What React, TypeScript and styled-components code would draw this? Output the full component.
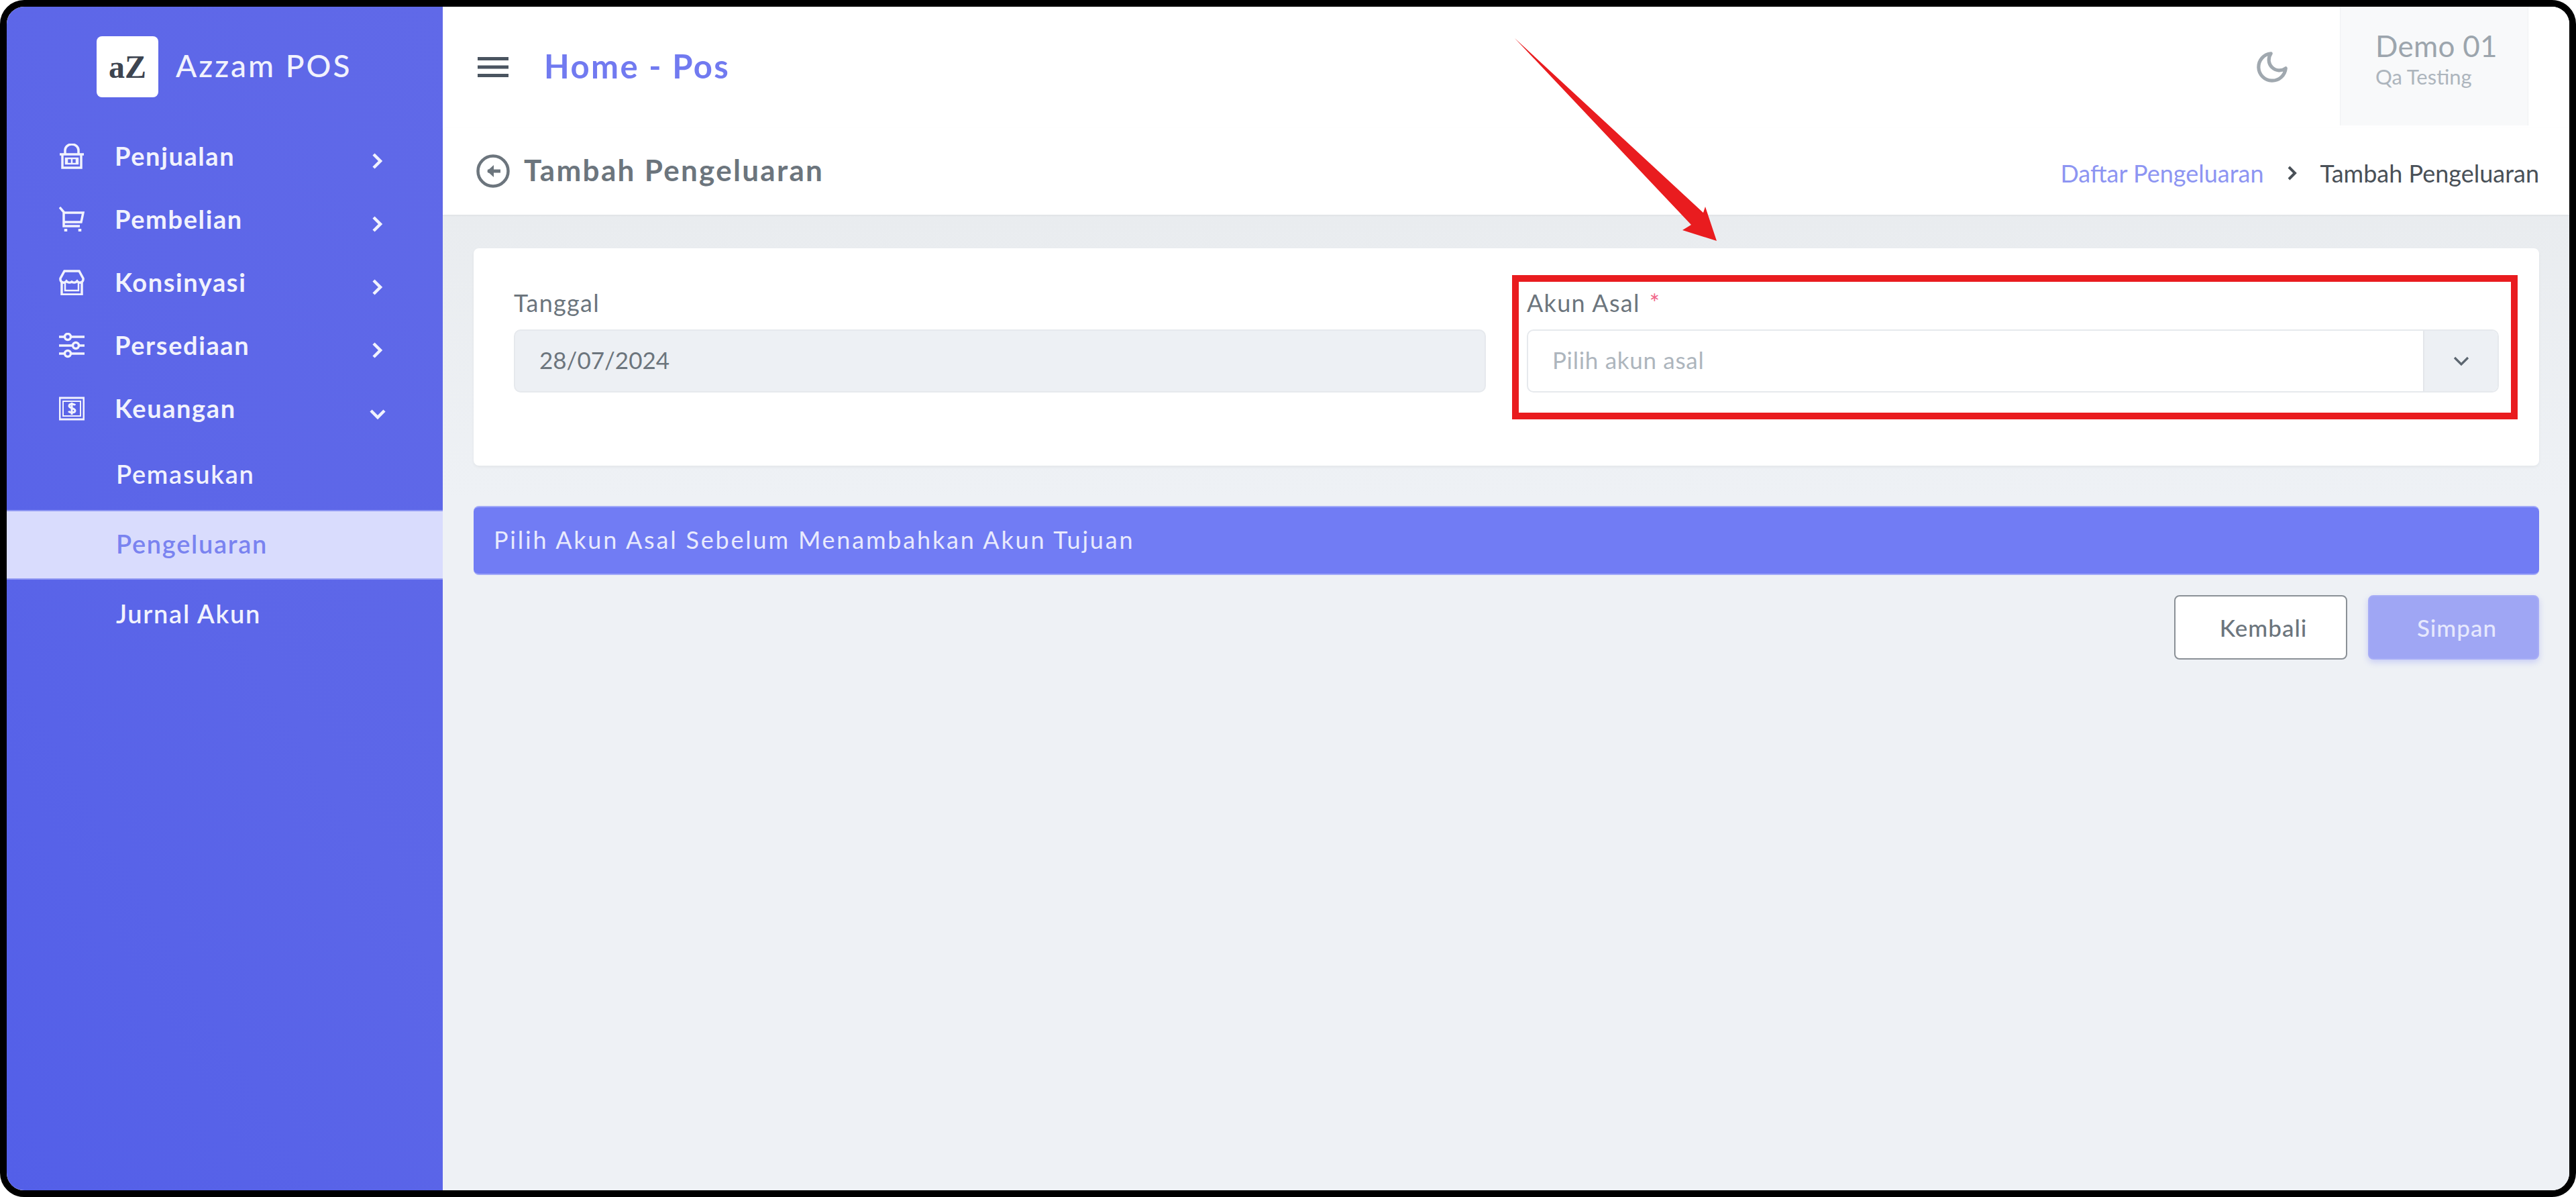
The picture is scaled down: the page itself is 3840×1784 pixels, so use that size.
import styled, { createGlobalStyle } from 'styled-components'
import type { FC, ReactNode } from 'react'

const GlobalStyle = createGlobalStyle`
  html, body {
    margin: 0;
    padding: 0;
    background: #ffffff;
  }
  * {
    box-sizing: border-box;
  }
`

const Frame = styled.div`
  position: relative;
  width: 3840px;
  height: 1784px;
  border: 10px solid #000000;
  border-radius: 36px;
  overflow: hidden;
  display: flex;
  font-family: Lato, "Noto Sans", sans-serif;
  background: #ffffff;
`

const Sidebar = styled.aside`
  width: 650px;
  flex-shrink: 0;
  padding-top: 44px;
  background: linear-gradient(60deg, #535fe8 0%, #5c66e8 50%, #6069e8 100%);
  color: #f1f2fd;
`

const Brand = styled.div`
  display: flex;
  align-items: center;
  gap: 26px;
  height: 91px;
  padding-left: 134px;
  margin-bottom: 41px;
`

const LogoBox = styled.div`
  width: 92px;
  height: 91px;
  background: #ffffff;
  border-radius: 8px;
  display: flex;
  align-items: center;
  justify-content: center;
  font-family: "Liberation Serif", serif;
  font-weight: 700;
  font-size: 48px;
  color: #3d4450;
`

const BrandName = styled.span`
  font-size: 46px;
  font-weight: 500;
  letter-spacing: 3px;
  margin-bottom: 4px;
`

const MenuItem = styled.div`
  height: 94px;
  display: flex;
  align-items: center;
  padding-left: 78px;
  padding-right: 84px;
  font-size: 38px;
  font-weight: 700;
  letter-spacing: 1.6px;
`

const MenuLabel = styled.span`
  margin-bottom: 3px;
  margin-left: -1px;
`

const MenuIcon = styled.svg`
  width: 38px;
  height: 38px;
  margin-right: 46px;
  fill: none;
  stroke: #f1f2fd;
  stroke-width: 3.5;
  flex-shrink: 0;
`

const MenuChevron = styled.svg`
  width: 26px;
  height: 26px;
  margin-left: auto;
  margin-top: 14px;
  fill: none;
  stroke: #f1f2fd;
  stroke-width: 4.5;
`

const SubItem = styled.div<{ $active?: boolean }>`
  height: 104px;
  display: flex;
  align-items: center;
  padding-left: 163px;
  padding-bottom: 4px;
  font-size: 38px;
  font-weight: 600;
  letter-spacing: 1.7px;
  color: ${p => (p.$active ? '#7a83f0' : '#f1f2fd')};
  background: ${p => (p.$active ? '#d9dcfd' : 'transparent')};
  border-top: 2px solid ${p => (p.$active ? '#8e96f3' : 'transparent')};
  border-bottom: 2px solid ${p => (p.$active ? '#8e96f3' : 'transparent')};
`

const Main = styled.main`
  flex: 1;
  display: flex;
  flex-direction: column;
  min-width: 0;
`

const TopBar = styled.header`
  height: 180px;
  display: flex;
  align-items: center;
  padding-left: 52px;
  padding-right: 61px;
  background: #ffffff;
`

const Burger = styled.svg`
  width: 46px;
  height: 30px;
  margin-right: 53px;
  fill: #4a5460;
`

const HomeTitle = styled.h1`
  margin: 0 0 4px;
  font-size: 49px;
  font-weight: 700;
  letter-spacing: 2.4px;
  color: #717af0;
`

const MoonIcon = styled.svg`
  width: 54px;
  height: 54px;
  margin-left: auto;
  margin-right: 74px;
  fill: none;
  stroke: #a0a8af;
  stroke-width: 2.3;
  stroke-linecap: round;
  stroke-linejoin: round;
`

const UserBox = styled.div`
  align-self: flex-start;
  width: 281px;
  height: 177px;
  padding: 32px 0 0 52px;
  background: #f8f9fa;
  border-left: 1px solid #eff1f3;
  border-right: 1px solid #eff1f3;
`

const UserName = styled.div`
  font-size: 44px;
  line-height: 52px;
  letter-spacing: .3px;
  color: #9ca5ad;
`

const UserRole = styled.div`
  font-size: 31px;
  line-height: 40px;
  color: #adb5bd;
`

const TitleBar = styled.div`
  height: 130px;
  display: flex;
  align-items: center;
  justify-content: space-between;
  padding-left: 50px;
  padding-right: 45px;
  background: #ffffff;
  box-shadow: 0 1px 3px rgba(0, 0, 0, .06);
  position: relative;
`

const PageTitle = styled.div`
  display: flex;
  align-items: center;
  gap: 21px;
  font-size: 44px;
  font-weight: 700;
  letter-spacing: 2.3px;
  color: #6c757d;
`

const PageTitleText = styled.span`
  margin-bottom: 4px;
`

const BackIcon = styled.svg`
  width: 50px;
  height: 50px;
  fill: none;
  stroke: #6c757d;
  stroke-width: 4.5;
`

const Breadcrumb = styled.nav`
  display: flex;
  align-items: center;
  margin-top: 6px;
  font-size: 36px;
  color: #495057;
`

const CrumbLink = styled.span`
  color: #8d95f2;
`

const CrumbSeparator = styled.svg`
  width: 24px;
  height: 24px;
  margin: 0 30px;
  fill: none;
  stroke: #495057;
  stroke-width: 4;
`

const Content = styled.div`
  flex: 1;
  padding: 50px 45px 0 46px;
  background: linear-gradient(180deg, #e9ecef 0, #eef1f5 420px);
`

const Card = styled.section`
  height: 324px;
  display: grid;
  grid-template-columns: 1449px 1449px;
  column-gap: 61px;
  padding: 64px 60px 0;
  background: #ffffff;
  border-radius: 8px;
  box-shadow: 0 2px 4px rgba(0, 0, 0, .05);
`

const Label = styled.label`
  display: block;
  height: 57px;
  font-size: 36px;
  line-height: 34px;
  letter-spacing: 1.3px;
  color: #6c757d;
`

const Required = styled.span`
  margin-left: 14px;
  color: #f1668a;
`

const Field = styled.div<{ $disabled?: boolean }>`
  height: 94px;
  display: flex;
  align-items: center;
  padding-left: 36px;
  font-size: 35px;
  letter-spacing: ${p => (p.$disabled ? '0' : '.7px')};
  color: ${p => (p.$disabled ? '#6c757d' : '#adb5bd')};
  background: ${p => (p.$disabled ? '#edf0f4' : '#ffffff')};
  border: 2px solid #e6e9ed;
  border-radius: 10px;
  overflow: hidden;
`

const FieldText = styled.span`
  margin-bottom: 4px;
`

const SelectButton = styled.div`
  width: 111px;
  height: 100%;
  margin-left: auto;
  display: flex;
  align-items: center;
  justify-content: center;
  background: #edf0f4;
  border-left: 2px solid #e3e6ea;
`

const SelectChevron = styled.svg`
  width: 30px;
  height: 30px;
  fill: none;
  stroke: #5c6670;
  stroke-width: 3.2;
`

const Alert = styled.div`
  height: 103px;
  margin-top: 60px;
  display: flex;
  align-items: center;
  padding-left: 30px;
  padding-bottom: 4px;
  font-size: 36px;
  letter-spacing: 2.8px;
  color: #e8eafd;
  background: #717cf4;
  border-top: 2px solid #a0a8f8;
  border-bottom: 2px solid #a0a8f8;
  border-radius: 8px;
`

const Actions = styled.div`
  display: flex;
  justify-content: flex-end;
  gap: 31px;
  margin-top: 30px;
`

const Button = styled.div<{ $primary?: boolean }>`
  width: ${p => (p.$primary ? '255px' : '258px')};
  height: 96px;
  display: flex;
  align-items: center;
  justify-content: center;
  padding-left: ${p => (p.$primary ? '10px' : '8px')};
  font-size: 35px;
  font-weight: 500;
  letter-spacing: 1px;
  border-radius: 8px;
  color: ${p => (p.$primary ? '#e6e8fd' : '#6c757d')};
  background: ${p => (p.$primary ? '#9fa6f4' : '#ffffff')};
  border: 2px solid ${p => (p.$primary ? '#a7adf6' : '#8a9096')};
  box-shadow: ${p => (p.$primary ? '0 4px 10px rgba(113, 124, 244, .3)' : 'none')};
`

const RedBox = styled.div`
  position: absolute;
  left: 2244px;
  top: 400px;
  width: 1499px;
  height: 215px;
  border: 10px solid #e91c1f;
  pointer-events: none;
`

const Arrow = styled.svg`
  position: absolute;
  left: 2230px;
  top: 30px;
  width: 330px;
  height: 320px;
  fill: #e91c1f;
  pointer-events: none;
`

const Chevron: FC = () => (
  <MenuChevron viewBox="0 0 26 26"><path d="M7 3l10 10-10 10" /></MenuChevron>
)

const menu: { label: string; open?: boolean; icon: ReactNode }[] = [
  {
    label: 'Penjualan',
    icon: (
      <>
        <path d="M9 15V10a10 9 0 0 1 20 0v5" />
        <path d="M1 16h36" />
        <path d="M5 16v20h28V16" />
        <path d="M12 22v8M19 22v8M26 22v8M10 22h18v8H10z" strokeWidth="2.5" />
      </>
    ),
  },
  {
    label: 'Pembelian',
    icon: (
      <>
        <path d="M1 1l6 7v21h24" />
        <path d="M7 9h29l-3 14H7" />
        <path d="M10 33v4M31 33v4" strokeWidth="4.5" />
      </>
    ),
  },
  {
    label: 'Konsinyasi',
    icon: (
      <>
        <path d="M8 2h22l6 11v2a5 5 0 0 1-9 2 6 6 0 0 1-8 1 6 6 0 0 1-8-1 5 5 0 0 1-9-2v-2z" />
        <path d="M4 18v19h30V18" />
        <path d="M9 20v11h20V20" strokeWidth="2.5" />
      </>
    ),
  },
  {
    label: 'Persediaan',
    icon: (
      <>
        <path d="M0 6h38M0 19h38M0 31h38" />
        <circle cx="13" cy="6" r="4.5" fill="#5a65e8" />
        <circle cx="25" cy="19" r="4.5" fill="#5a65e8" />
        <circle cx="13" cy="31" r="4.5" fill="#5a65e8" />
      </>
    ),
  },
  {
    label: 'Keuangan',
    open: true,
    icon: (
      <>
        <path d="M1 3h36v32H1z" strokeWidth="3" />
        <path d="M6 8h26v22H6z" strokeWidth="2" />
        <path d="M24 14c-1-2-9-3-9 1s9 3 9 7-8 3-10 1M19 10v18" strokeWidth="3" />
      </>
    ),
  },
]

const App: FC = () => (
  <>
    <GlobalStyle />
    <Frame>
      <Sidebar>
        <Brand>
          <LogoBox>aZ</LogoBox>
          <BrandName>Azzam POS</BrandName>
        </Brand>
        {menu.map(item => (
          <MenuItem key={item.label}>
            <MenuIcon viewBox="0 0 38 38">{item.icon}</MenuIcon>
            <MenuLabel>{item.label}</MenuLabel>
            {item.open
              ? <MenuChevron viewBox="0 0 26 26"><path d="M3 9l10 10 10-10" /></MenuChevron>
              : <Chevron />}
          </MenuItem>
        ))}
        <SubItem>Pemasukan</SubItem>
        <SubItem $active>Pengeluaran</SubItem>
        <SubItem>Jurnal Akun</SubItem>
      </Sidebar>

      <Main>
        <TopBar>
          <Burger viewBox="0 0 46 30">
            <rect y="0" width="46" height="5" />
            <rect y="12.5" width="46" height="5" />
            <rect y="25" width="46" height="5" />
          </Burger>
          <HomeTitle>Home - Pos</HomeTitle>
          <MoonIcon viewBox="0 0 24 24">
            <path d="M21 12.79A9 9 0 1 1 11.21 3 7 7 0 0 0 21 12.79z" />
          </MoonIcon>
          <UserBox>
            <UserName>Demo 01</UserName>
            <UserRole>Qa Testing</UserRole>
          </UserBox>
        </TopBar>

        <TitleBar>
          <PageTitle>
            <BackIcon viewBox="0 0 50 50">
              <circle cx="25" cy="25" r="22.5" />
              <path d="M36 25H17" strokeWidth="5" />
              <path d="M26 16l-10 9 10 9z" fill="#6c757d" stroke="none" />
            </BackIcon>
            <PageTitleText>Tambah Pengeluaran</PageTitleText>
          </PageTitle>
          <Breadcrumb>
            <CrumbLink>Daftar Pengeluaran</CrumbLink>
            <CrumbSeparator viewBox="0 0 24 24"><path d="M7 3l9 9-9 9" /></CrumbSeparator>
            Tambah Pengeluaran
          </Breadcrumb>
        </TitleBar>

        <Content>
          <Card>
            <div>
              <Label>Tanggal</Label>
              <Field $disabled><FieldText>28/07/2024</FieldText></Field>
            </div>
            <div>
              <Label>Akun Asal<Required>*</Required></Label>
              <Field>
                <FieldText>Pilih akun asal</FieldText>
                <SelectButton>
                  <SelectChevron viewBox="0 0 30 30"><path d="M5 10l10 10 10-10" /></SelectChevron>
                </SelectButton>
              </Field>
            </div>
          </Card>
          <Alert>Pilih Akun Asal Sebelum Menambahkan Akun Tujuan</Alert>
          <Actions>
            <Button>Kembali</Button>
            <Button $primary>Simpan</Button>
          </Actions>
        </Content>
      </Main>

      <RedBox />
      <Arrow viewBox="0 0 330 320">
        <polygon points="18,17 299,277 302,268 319,319 268,303 281,295" />
      </Arrow>
    </Frame>
  </>
)

export default App
